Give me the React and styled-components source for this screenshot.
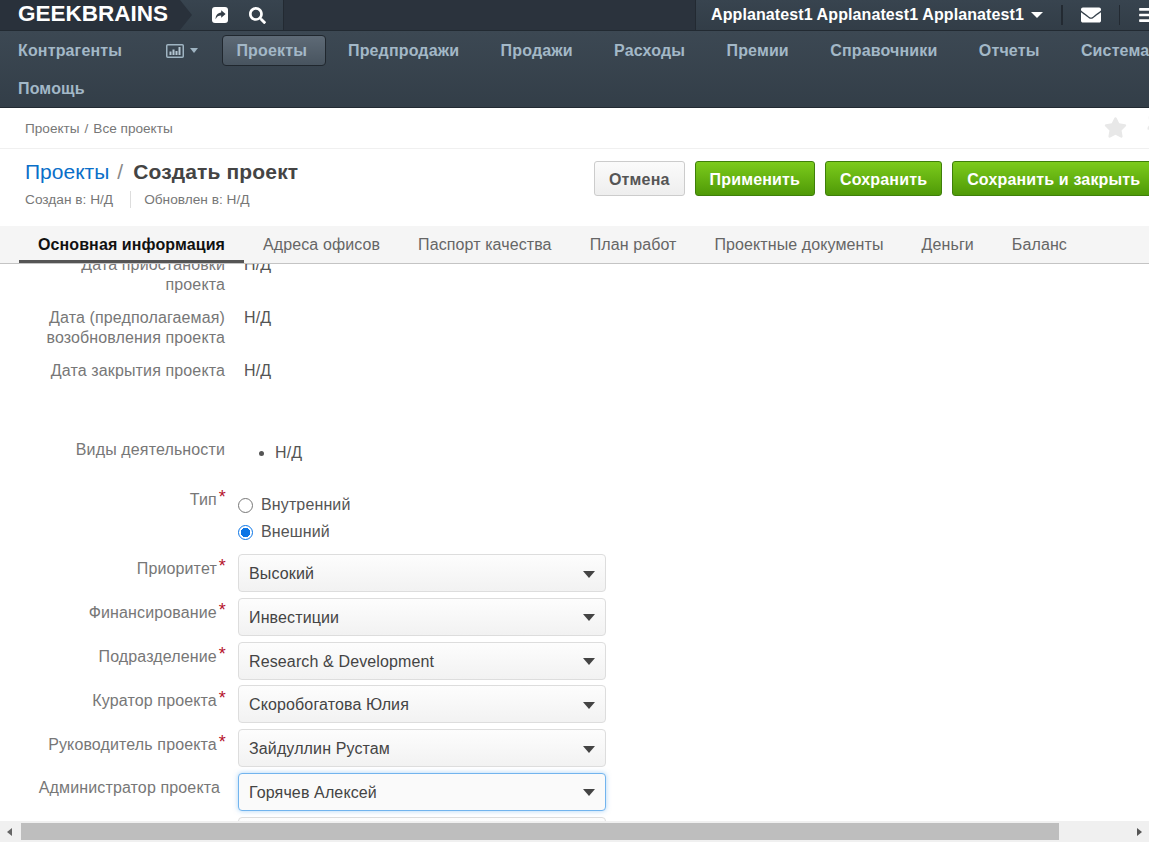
import React from 'react';
import styled, { createGlobalStyle } from 'styled-components';
import { FaSearch, FaEnvelope, FaBars, FaStar, FaThumbtack } from 'react-icons/fa';

const GlobalStyle = createGlobalStyle`
  html, body { margin: 0; padding: 0; height: 100%; overflow: hidden; background: #fff; }
  body { font-family: "Liberation Sans", Arial, sans-serif; font-size: 16px; letter-spacing: 0.13px; color: #444; }
  #root { height: 100%; }
`;

const menu = ['Контрагенты', 'chart', 'Проекты', 'Предпродажи', 'Продажи', 'Расходы', 'Премии', 'Справочники', 'Отчеты', 'Система', 'Помощь'];
const tabs = ['Основная информация', 'Адреса офисов', 'Паспорт качества', 'План работ', 'Проектные документы', 'Деньги', 'Баланс'];
const selects = [
  { label: 'Приоритет', value: 'Высокий', required: true },
  { label: 'Финансирование', value: 'Инвестиции', required: true },
  { label: 'Подразделение', value: 'Research & Development', required: true },
  { label: 'Куратор проекта', value: 'Скоробогатова Юлия', required: true },
  { label: 'Руководитель проекта', value: 'Зайдуллин Рустам', required: true },
  { label: 'Администратор проекта', value: 'Горячев Алексей', focused: true },
  { label: '', value: '' },
];

export default function App() {
  return (
    <Screen>
      <GlobalStyle />
      <Viewport>
        <Page>
          <TopBar>
            <Logo>GEEKBRAINS</Logo>
            <QuickIcons>
              <ShareIcon />
              <FaSearch size={17} />
            </QuickIcons>
            <UserArea>
              <UserName>Applanatest1 Applanatest1 Applanatest1</UserName>
              <Caret $color="#fff" $size={6} />
              <UserIcon><FaEnvelope size={20} /></UserIcon>
              <UserIcon><FaBars size={18} /></UserIcon>
            </UserArea>
          </TopBar>
          <Menu>
            {menu.map(item =>
              item === 'chart' ? (
                <ChartItem key={item}>
                  <ChartIcon />
                  <Caret $color="#9fb4c2" $size={4.5} />
                </ChartItem>
              ) : (
                <MenuItem key={item} $active={item === 'Проекты'}>{item}</MenuItem>
              )
            )}
          </Menu>
          <Breadcrumbs>
            <span>Проекты<CrumbSep>/</CrumbSep>Все проекты</span>
            <PinIcons>
              <FaStar size={23} />
              <FaThumbtack size={20} />
            </PinIcons>
          </Breadcrumbs>
          <PageHeader>
            <div>
              <Title>
                <TitleLink>Проекты</TitleLink>
                <TitleSep>/</TitleSep>
                <b>Создать проект</b>
              </Title>
              <Meta>
                <MetaItem>Создан в: Н/Д</MetaItem>
                <MetaItem>Обновлен в: Н/Д</MetaItem>
              </Meta>
            </div>
            <Actions>
              <Button>Отмена</Button>
              <Button $primary>Применить</Button>
              <Button $primary>Сохранить</Button>
              <Button $primary>Сохранить и закрыть</Button>
            </Actions>
          </PageHeader>
          <TabBar>
            {tabs.map((tab, i) => <Tab key={tab} $active={i === 0}>{tab}</Tab>)}
          </TabBar>
          <Content>
            <Form>
              <Row $after={13}>
                <Label>Дата приостановки<br />проекта</Label>
                <Value>Н/Д</Value>
              </Row>
              <Row $after={13}>
                <Label>Дата (предполагаемая)<br />возобновления проекта</Label>
                <Value>Н/Д</Value>
              </Row>
              <Row $after={59}>
                <Label>Дата закрытия проекта</Label>
                <Value>Н/Д</Value>
              </Row>
              <Row $after={27}>
                <Label>Виды деятельности</Label>
                <Activities><li>Н/Д</li></Activities>
              </Row>
              <Row $after={12}>
                <Label>Тип<Required>*</Required></Label>
                <Radios>
                  <RadioLine><RadioMark />Внутренний</RadioLine>
                  <RadioLine><RadioMark $checked />Внешний</RadioLine>
                </Radios>
              </Row>
              {selects.map(s => (
                <Row key={s.label} $after={5.8}>
                  <Label $select $inset={s.focused}>{s.label}{s.required && <Required>*</Required>}</Label>
                  <Select $focused={s.focused}>
                    <span>{s.value}</span>
                    {s.value && <Caret $color="#444" $size={6.5} />}
                  </Select>
                </Row>
              ))}
            </Form>
          </Content>
        </Page>
      </Viewport>
      <ScrollBar>
        <ScrollArrow $dir="left" />
        <ScrollThumb />
        <ScrollArrow $dir="right" />
      </ScrollBar>
    </Screen>
  );
}

function ShareIcon() {
  return (
    <svg width="16" height="16" viewBox="0 0 16 16">
      <rect width="16" height="16" rx="3" fill="#fff" />
      <path d="M9.2 3.2 13.6 7 9.2 10.8V8.5C6.6 8.4 5 9.4 3.6 12.2 3.6 8.2 5.6 5.7 9.2 5.4z" fill="#333d47" />
    </svg>
  );
}

function ChartIcon() {
  return (
    <svg width="18" height="14" viewBox="0 0 18 14" fill="none">
      <rect x="0.75" y="0.75" width="16.5" height="12.5" rx="1" stroke="#9fb4c2" strokeWidth="1.5" />
      <path d="M3.5 7.5h2V11h-2zM6.5 5.5h2V11h-2zM9.5 7h2v4h-2zM12.5 3h2v8h-2z" fill="#b4c6d2" />
    </svg>
  );
}

const Screen = styled.div`
  height: 100vh;
  width: 100vw;
  display: flex;
  flex-direction: column;
  overflow: hidden;
`;

const Viewport = styled.div`
  flex: 1;
  min-height: 0;
  overflow: hidden;
`;

const Page = styled.div`
  width: 1225px;
  height: 100%;
  display: flex;
  flex-direction: column;
`;

const TopBar = styled.div`
  height: 30px;
  flex: none;
  display: flex;
  align-items: stretch;
  background: #2b333d;
  border-bottom: 1px solid #222a32;
`;

const Logo = styled.div`
  position: relative;
  width: 180px;
  padding-left: 18px;
  box-sizing: border-box;
  color: #fff;
  font-size: 22.5px;
  font-weight: 700;
  letter-spacing: 0;
  line-height: 27px;
  background: #29313b;
  z-index: 1;
  &::after {
    content: '';
    position: absolute;
    left: 180px;
    top: 0;
    border-left: 12px solid #29313b;
    border-top: 15px solid transparent;
    border-bottom: 15px solid transparent;
  }
`;

const QuickIcons = styled.div`
  width: 104px;
  padding-left: 32px;
  box-sizing: border-box;
  display: flex;
  align-items: center;
  gap: 21px;
  color: #fff;
  background: linear-gradient(#38444f, #323d47);
  border-right: 1px solid #232a32;
`;

const UserArea = styled.div`
  margin-left: auto;
  width: 530px;
  padding-left: 15px;
  box-sizing: border-box;
  display: flex;
  align-items: center;
  background: linear-gradient(#38444f, #323d47);
  border-left: 1px solid #232a32;
  color: #fff;
`;

const UserName = styled.div`
  font-size: 16px;
  font-weight: 700;
  letter-spacing: 0.1px;
  margin-right: 7px;
  white-space: nowrap;
`;

const UserIcon = styled.div`
  display: flex;
  align-items: center;
  height: 20px;
  padding: 0 18px;
  &:nth-of-type(2) { margin-left: 18px; border-left: 2px solid #232a32; }
  &:nth-of-type(3) { border-left: 1px solid #232a32; }
`;

const Caret = styled.span`
  display: inline-block;
  width: 0;
  height: 0;
  border-left: ${p => p.$size}px solid transparent;
  border-right: ${p => p.$size}px solid transparent;
  border-top: ${p => Math.ceil(p.$size)}px solid ${p => p.$color};
`;

const Menu = styled.nav`
  height: 77px;
  flex: none;
  box-sizing: border-box;
  padding: 4px 0 3px 4px;
  display: flex;
  flex-wrap: wrap;
  align-content: flex-start;
  column-gap: 13.4px;
  row-gap: 7px;
  background: linear-gradient(#3c4853, #333e48);
  border-bottom: 1px solid #222a32;
`;

const MenuItem = styled.a`
  height: 31px;
  box-sizing: border-box;
  padding: 0 ${p => (p.$active ? 18 : 13)}px 0 13px;
  margin-right: ${p => (p.$active ? -5.4 : 0)}px;
  display: flex;
  align-items: center;
  border-radius: 4px;
  font-size: 16px;
  font-weight: 700;
  letter-spacing: 0.15px;
  white-space: nowrap;
  color: #a3b8c7;
  border: 1px solid ${p => (p.$active ? '#20272e' : 'transparent')};
  background: ${p => (p.$active ? 'linear-gradient(#5e6a76, #48545f)' : 'none')};
`;

const ChartItem = styled.a`
  height: 31px;
  box-sizing: border-box;
  padding: 0 11px 0 16.6px;
  display: flex;
  align-items: center;
  gap: 6px;
`;

const Breadcrumbs = styled.div`
  height: 41px;
  flex: none;
  box-sizing: border-box;
  padding: 0 0 0 25px;
  display: flex;
  align-items: center;
  justify-content: space-between;
  font-size: 13.6px;
  letter-spacing: 0;
  color: #777;
  border-bottom: 1px solid #f0f0f0;
`;

const CrumbSep = styled.span`
  margin: 0 5px;
`;

const PinIcons = styled.div`
  width: 121px;
  margin-top: -2px;
  display: flex;
  gap: 18px;
  color: #e8e8e8;
`;

const PageHeader = styled.div`
  height: 77px;
  flex: none;
  box-sizing: border-box;
  padding: 11px 0 0 25px;
  display: flex;
  justify-content: space-between;
`;

const Title = styled.div`
  font-size: 21px;
  letter-spacing: 0;
  line-height: 24px;
  color: #444;
  & b { letter-spacing: 0.15px; }
`;

const TitleLink = styled.a`
  color: #0a6fc9;
`;

const TitleSep = styled.span`
  color: #888;
  margin: 0 10px 0 8px;
`;

const Meta = styled.div`
  display: flex;
  margin-top: 7px;
  font-size: 13.7px;
  letter-spacing: 0;
  color: #777;
`;

const MetaItem = styled.div`
  line-height: 17px;
  &:first-child {
    padding-right: 17px;
    margin-right: 13px;
    border-right: 1px solid #ddd;
  }
`;

const Actions = styled.div`
  width: 631px;
  margin-top: 1px;
  display: flex;
  gap: 10px;
  align-items: flex-start;
`;

const Button = styled.button`
  height: 35px;
  box-sizing: border-box;
  padding: 2px 14px 0;
  margin: 0;
  border-radius: 3px;
  font-family: inherit;
  font-size: 16px;
  font-weight: 700;
  letter-spacing: 0.16px;
  white-space: nowrap;
  border: 1px solid ${p => (p.$primary ? '#3f7f0a' : '#ccc')};
  color: ${p => (p.$primary ? '#fff' : '#555')};
  background: ${p => (p.$primary ? 'linear-gradient(#7ccb1c, #4f9a07)' : 'linear-gradient(#fbfbfb, #eee)')};
`;

const TabBar = styled.div`
  height: 38px;
  flex: none;
  box-sizing: border-box;
  padding-left: 19px;
  display: flex;
  background: #f5f5f5;
  border-bottom: 1px solid #c4c4c4;
  position: relative;
  z-index: 1;
`;

const Tab = styled.div`
  padding: 0 19px;
  line-height: 37px;
  white-space: nowrap;
  font-size: 16px;
  letter-spacing: 0.1px;
  color: ${p => (p.$active ? '#111' : '#666')};
  font-weight: ${p => (p.$active ? 700 : 400)};
  height: 34px;
  border-bottom: ${p => (p.$active ? '3px solid #555' : 'none')};
`;

const Content = styled.div`
  flex: 1;
  min-height: 0;
  overflow: hidden;
`;

const Form = styled.div`
  margin-top: -9px;
`;

const Row = styled.div`
  display: grid;
  grid-template-columns: 226px 368px;
  column-gap: 12px;
  margin-bottom: ${p => p.$after}px;
  min-height: 20px;
`;

const Label = styled.div`
  text-align: right;
  line-height: 20px;
  color: #777;
  padding-top: ${p => (p.$select ? 5.4 : 0)}px;
  padding-right: ${p => (p.$inset ? 6 : 1)}px;
  white-space: nowrap;
`;

const Required = styled.span`
  color: #b5122b;
  font-size: 18px;
  line-height: 14px;
  vertical-align: top;
  margin: 0 -1px 0 2px;
`;

const Value = styled.div`
  padding-left: 6px;
  line-height: 20px;
  color: #555;
`;

const Activities = styled.ul`
  margin: 3px 0 0;
  padding-left: 37px;
  line-height: 20px;
  color: #555;
`;

const Radios = styled.div`
  padding-top: 5px;
  display: flex;
  flex-direction: column;
  gap: 7px;
`;

const RadioLine = styled.label`
  display: flex;
  align-items: center;
  gap: 8px;
  line-height: 20px;
  color: #555;
`;

const RadioMark = styled.span`
  width: 15px;
  height: 15px;
  box-sizing: border-box;
  border-radius: 50%;
  background: ${p => (p.$checked ? 'radial-gradient(circle, #0b75e6 0 4.5px, #fff 5px)' : '#fff')};
  border: ${p => (p.$checked ? '1.5px solid #0b75e6' : '1.5px solid #777')};
`;

const Select = styled.div`
  height: 38px;
  box-sizing: border-box;
  padding: 2px 10px 0;
  display: flex;
  align-items: center;
  justify-content: space-between;
  border-radius: 4px;
  color: #444;
  border: 1px solid ${p => (p.$focused ? '#72b4ee' : '#ddd')};
  background: ${p => (p.$focused ? '#fafafa' : 'linear-gradient(#fdfdfd, #f2f2f2)')};
  box-shadow: ${p => (p.$focused ? '0 0 5px rgba(90, 170, 240, 0.5)' : 'none')};
`;

const ScrollBar = styled.div`
  height: 21px;
  flex: none;
  box-sizing: border-box;
  padding: 2px 0;
  display: flex;
  align-items: stretch;
  background: #f0f0f0;
`;

const ScrollArrow = styled.div`
  flex: none;
  width: ${p => (p.$dir === 'left' ? 21 : 90)}px;
  display: flex;
  align-items: center;
  justify-content: ${p => (p.$dir === 'left' ? 'flex-start' : 'flex-end')};
  padding: ${p => (p.$dir === 'left' ? '0 0 0 7px' : '0 7px 0 0')};
  box-sizing: border-box;
  &::before {
    content: '';
    border-top: 4.5px solid transparent;
    border-bottom: 4.5px solid transparent;
    ${p => (p.$dir === 'left' ? 'border-right: 5px solid #666;' : 'border-left: 5px solid #555;')}
  }
`;

const ScrollThumb = styled.div`
  flex: 1;
  background: #bebebe;
`;
